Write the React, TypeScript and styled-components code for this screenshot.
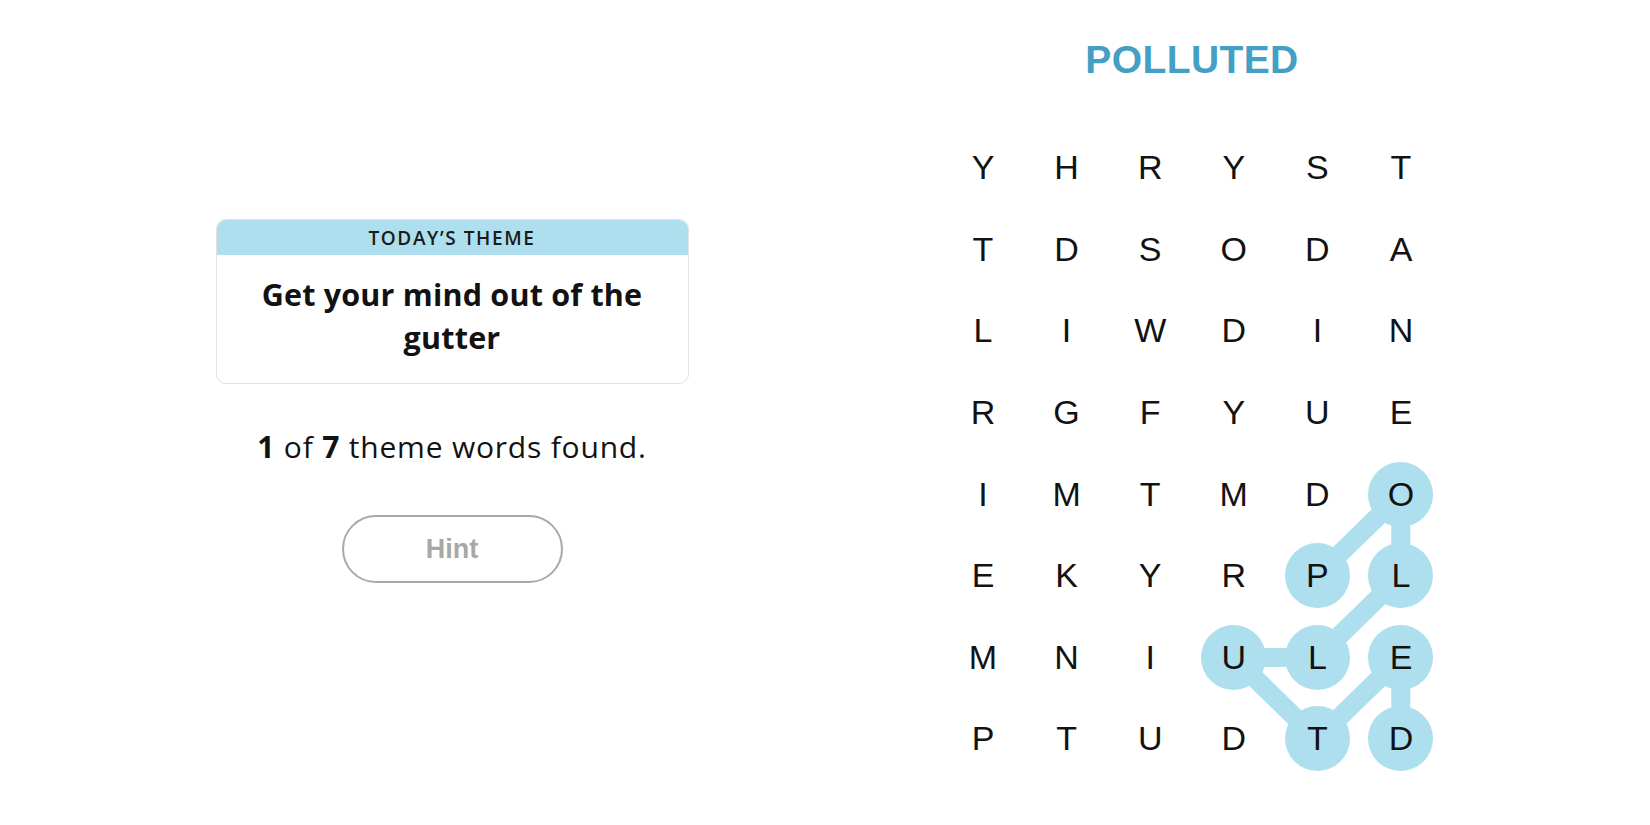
import React from "react";
import styled, { createGlobalStyle } from "styled-components";

const Global = createGlobalStyle`
  html, body { margin: 0; padding: 0; background: #ffffff; }
  body { font-family: "Open Sans", "Liberation Sans", sans-serif; color: #121212; }
`;

const Page = styled.div`
  width: 1650px;
  height: 825px;
  display: flex;
  padding-left: 82px;
  box-sizing: border-box;
  overflow: hidden;
`;

const LeftColumn = styled.section`
  width: 740px;
  display: flex;
  flex-direction: column;
  align-items: center;
  padding-top: 219px;
  box-sizing: border-box;
`;

const RightColumn = styled.section`
  width: 740px;
  display: flex;
  flex-direction: column;
  align-items: center;
  padding-top: 28px;
  box-sizing: border-box;
`;

const ThemeCard = styled.div`
  width: 473px;
  border: 1px solid #e2e2e2;
  border-radius: 10px;
  overflow: hidden;
  box-sizing: border-box;
`;

const ThemeHeader = styled.div`
  height: 35px;
  background: #aedfee;
  display: flex;
  align-items: center;
  justify-content: center;
  font-family: "Open Sans", "Liberation Sans", sans-serif;
  font-size: 19px;
  font-weight: 600;
  letter-spacing: 1.6px;
  color: #1a1a1a;
  text-transform: uppercase;
`;

const ThemeBody = styled.div`
  padding: 18px 20px 24px;
  text-align: center;
  font-family: "Open Sans", "Liberation Sans", sans-serif;
  font-size: 30.5px;
  font-weight: 700;
  line-height: 43px;
  letter-spacing: 0.2px;
  color: #121212;
`;

const Progress = styled.p`
  margin: 43px 0 0;
  font-family: "Open Sans", "Liberation Sans", sans-serif;
  font-size: 30px;
  line-height: 40px;
  letter-spacing: 0.8px;
  color: #121212;
  b { font-weight: 700; }
`;

const HintButton = styled.button`
  margin-top: 48px;
  width: 221px;
  height: 68px;
  border: 2px solid #a9a9a9;
  border-radius: 34px;
  background: #ffffff;
  font-family: "Liberation Sans", "Open Sans", sans-serif;
  font-size: 27px;
  font-weight: 700;
  color: #a8a8a8;
  cursor: default;
`;

const Title = styled.h1`
  margin: 0;
  height: 64px;
  line-height: 64px;
  font-family: "Liberation Sans", "Open Sans", sans-serif;
  font-size: 39px;
  font-weight: 700;
  color: #449fc4;
  letter-spacing: 0.4px;
`;

const CELL_W = 83.6;
const CELL_H = 81.6;

const Board = styled.div`
  position: relative;
  margin-top: 35px;
  width: ${CELL_W * 6}px;
  height: ${CELL_H * 8}px;
`;

const Connectors = styled.svg`
  position: absolute;
  left: 0;
  top: 0;
  z-index: 0;
`;

const LetterGrid = styled.div`
  position: relative;
  z-index: 1;
  display: grid;
  grid-template-columns: repeat(6, ${CELL_W}px);
  grid-template-rows: repeat(8, ${CELL_H}px);
`;

const Cell = styled.div`
  display: flex;
  align-items: center;
  justify-content: center;
`;

const Letter = styled.span<{ $on: boolean }>`
  width: 65px;
  height: 65px;
  border-radius: 50%;
  display: flex;
  align-items: center;
  justify-content: center;
  background: ${(p) => (p.$on ? "#aedfee" : "transparent")};
  font-family: "Liberation Sans", "Open Sans", sans-serif;
  font-size: 34px;
  font-weight: 400;
  color: #121212;
`;

const rows = [
  "YHRYST",
  "TDSODA",
  "LIWDIN",
  "RGFYUE",
  "IMTMDO",
  "EKYRPL",
  "MNIULE",
  "PTUDTD",
];

const path: [number, number][] = [
  [5, 4],
  [4, 5],
  [5, 5],
  [6, 4],
  [6, 3],
  [7, 4],
  [6, 5],
  [7, 5],
];

const isOn = (r: number, c: number) => path.some(([pr, pc]) => pr === r && pc === c);

export default function App() {
  const pts = path
    .map(([r, c]) => `${c * CELL_W + CELL_W / 2},${r * CELL_H + CELL_H / 2}`)
    .join(" ");
  return (
    <>
      <Global />
      <Page>
        <LeftColumn>
          <ThemeCard>
            <ThemeHeader>Today’s Theme</ThemeHeader>
            <ThemeBody>
              Get your mind out of the
              <br />
              gutter
            </ThemeBody>
          </ThemeCard>
          <Progress>
            <b>1</b> of <b>7</b> theme words found.
          </Progress>
          <HintButton>Hint</HintButton>
        </LeftColumn>
        <RightColumn>
          <Title>POLLUTED</Title>
          <Board>
            <Connectors width={CELL_W * 6} height={CELL_H * 8}>
              <polyline
                points={pts}
                fill="none"
                stroke="#aedfee"
                strokeWidth={19}
                strokeLinejoin="round"
                strokeLinecap="round"
              />
            </Connectors>
            <LetterGrid>
              {rows.map((row, r) =>
                row.split("").map((ch, c) => (
                  <Cell key={`${r}-${c}`}>
                    <Letter $on={isOn(r, c)}>{ch}</Letter>
                  </Cell>
                ))
              )}
            </LetterGrid>
          </Board>
        </RightColumn>
      </Page>
    </>
  );
}
